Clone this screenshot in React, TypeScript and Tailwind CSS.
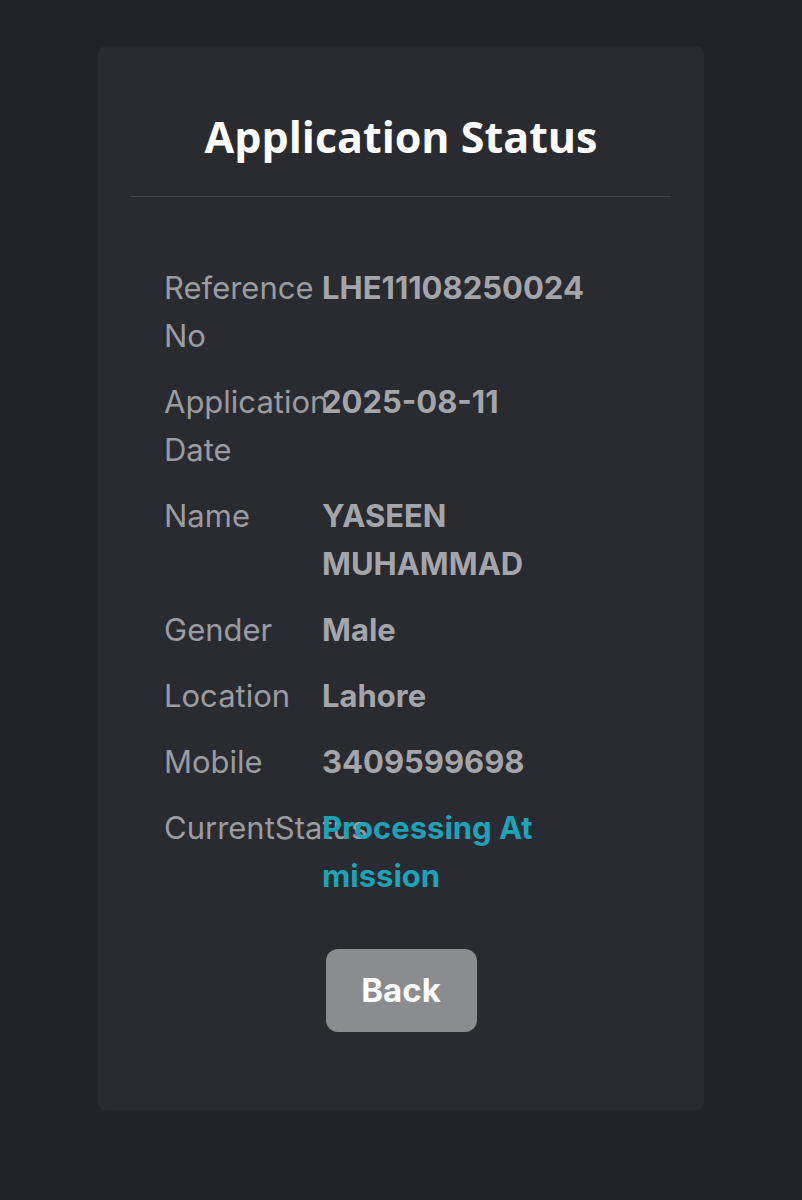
import React from "react";

const rows: { label: string; value: string; status?: boolean }[] = [
  { label: "Reference No", value: "LHE11108250024" },
  { label: "Application Date", value: "2025-08-11" },
  { label: "Name", value: "YASEEN MUHAMMAD" },
  { label: "Gender", value: "Male" },
  { label: "Location", value: "Lahore" },
  { label: "Mobile", value: "3409599698" },
  { label: "CurrentStatus", value: "Processing At mission", status: true },
];

export default function App() {
  return (
    <div className="min-h-[1200px] bg-[#212328] pt-[46px]" style={{ fontFamily: "Inter, 'Noto Sans', sans-serif" }}>
      <div className="mx-auto w-[606px] rounded-lg bg-[#2a2b30] px-[33px] pt-[67px] pb-[78px]">
        <h1 className="text-center text-[43px] leading-[48px] font-bold text-white" style={{ fontFamily: "'Open Sans', sans-serif" }}>
          Application Status
        </h1>
        <hr className="mt-[35px] border-[#45464b]" />

        {/* details */}
        <div className="mt-[67px] flex flex-col gap-[18px] px-[33px]">
          {rows.map((r) => (
            <div key={r.label} className="grid grid-cols-3 leading-[48px]">
              <div className="text-[31px] text-[#9b9ca1]">{r.label}</div>
              <div className={"col-span-2 text-[31px] font-bold " + (r.status ? "text-[#1ca3b9]" : "text-[#a4a5aa]")}>
                {r.value}
              </div>
            </div>
          ))}
        </div>

        <div className="mt-[49px] flex justify-center">
          <button className="h-[83px] w-[151px] rounded-xl bg-[#8b8c90] text-[33px] font-bold text-white">
            Back
          </button>
        </div>
      </div>
    </div>
  );
}
